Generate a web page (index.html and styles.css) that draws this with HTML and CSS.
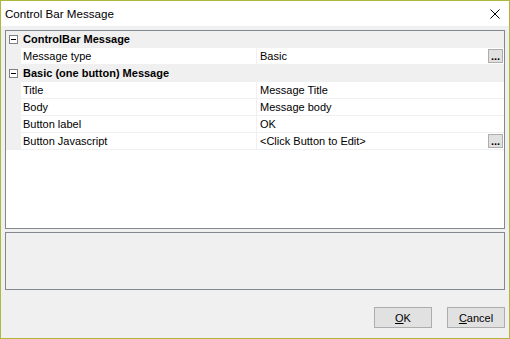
FILE: index.html
```html
<!DOCTYPE html>
<html>
<head>
<meta charset="utf-8">
<link rel="stylesheet" href="styles.css">
</head>
<body>
<div class="window">
  <div class="titlebar">
    <span class="title">Control Bar Message</span>
    <svg class="close" width="10" height="10" viewBox="0 0 10 10"><path d="M0.5 0.5 L9.5 9.5 M9.5 0.5 L0.5 9.5" stroke="#000" stroke-width="1" fill="none"/></svg>
  </div>
  <div class="content">
    <div class="grid">
      <div class="row cat">
        <span class="margin"><span class="minus"></span></span>
        <span class="catname">ControlBar Message</span>
      </div>
      <div class="row prop">
        <span class="margin"></span>
        <span class="name">Message type</span>
        <span class="value">Basic<span class="ellip"><span class="dots">...</span></span></span>
      </div>
      <div class="row cat">
        <span class="margin"><span class="minus"></span></span>
        <span class="catname">Basic (one button) Message</span>
      </div>
      <div class="row prop">
        <span class="margin"></span>
        <span class="name">Title</span>
        <span class="value">Message Title</span>
      </div>
      <div class="row prop">
        <span class="margin"></span>
        <span class="name">Body</span>
        <span class="value">Message body</span>
      </div>
      <div class="row prop">
        <span class="margin"></span>
        <span class="name">Button label</span>
        <span class="value">OK</span>
      </div>
      <div class="row prop">
        <span class="margin"></span>
        <span class="name">Button Javascript</span>
        <span class="value">&lt;Click Button to Edit&gt;<span class="ellip"><span class="dots">...</span></span></span>
      </div>
    </div>
    <div class="desc"></div>
    <div class="footer">
      <button class="btn"><u>O</u>K</button>
      <button class="btn"><u>C</u>ancel</button>
    </div>
  </div>
</div>
</body>
</html>
```
FILE: styles.css
```css
html, body {
  margin: 0;
  padding: 0;
  background: #f0f0f0;
}
.window {
  width: 510px;
  height: 339px;
  box-sizing: border-box;
  border: 1px solid #adb83c;
  background: #f0f0f0;
  display: flex;
  flex-direction: column;
}
.titlebar {
  height: 25px;
  background: #fff;
  display: flex;
  align-items: center;
  justify-content: space-between;
  padding: 0 9px 0 4px;
  flex-shrink: 0;
}
.title {
  font-family: "Liberation Sans", Arial, sans-serif;
  font-size: 11.6px;
  color: #000;
  margin-top: 0px;
}
.close {
  display: block;
  margin-top: 1px;
}
.content {
  padding: 4px 4px 0 4px;
  display: flex;
  flex-direction: column;
}
.grid {
  height: 199px;
  box-sizing: border-box;
  border: 1px solid #828790;
  background: #fff;
  font-family: "Liberation Sans", Arial, sans-serif;
  font-size: 11px;
  color: #000;
}
.row {
  height: 17px;
  box-sizing: border-box;
  border-bottom: 1px solid #f0f0f0;
  display: flex;
  align-items: stretch;
}
.row.cat {
  background: #f0f0f0;
}
.margin {
  width: 15px;
  flex-shrink: 0;
  background: #f0f0f0;
  display: flex;
  align-items: center;
}
.minus {
  width: 9px;
  height: 9px;
  box-sizing: border-box;
  border: 1px solid #808080;
  background: #fff;
  margin-left: 3px;
  position: relative;
}
.minus::after {
  content: "";
  position: absolute;
  left: 1px;
  top: 3px;
  width: 5px;
  height: 1px;
  background: #000;
}
.catname {
  font-weight: bold;
  padding-left: 2px;
  line-height: 16px;
}
.name {
  width: 235px;
  flex-shrink: 0;
  padding-left: 2px;
  box-sizing: border-box;
  line-height: 16px;
}
.value {
  flex: 1;
  border-left: 1px solid #f0f0f0;
  padding-left: 3px;
  line-height: 16px;
  position: relative;
}
.ellip {
  position: absolute;
  right: 1px;
  top: 1px;
  width: 15px;
  height: 14px;
  box-sizing: border-box;
  border: 1px solid #adadad;
  background: #e1e1e1;
  display: flex;
  justify-content: center;
}
.dots {
  font-weight: bold;
  font-size: 11px;
  line-height: 11px;
  letter-spacing: 0px;
  margin-top: 1px;
}
.desc {
  margin-top: 3px;
  height: 58px;
  box-sizing: border-box;
  border: 1px solid #828790;
  background: #f0f0f0;
}
.footer {
  display: flex;
  justify-content: flex-end;
  gap: 15px;
  margin-top: 17px;
  padding-right: 0px;
}
.btn {
  width: 58px;
  height: 21px;
  box-sizing: border-box;
  border: 1px solid #adadad;
  background: #e1e1e1;
  font-family: "Liberation Sans", Arial, sans-serif;
  font-size: 11px;
  color: #000;
  padding: 0;
  margin: 0;
}
```
